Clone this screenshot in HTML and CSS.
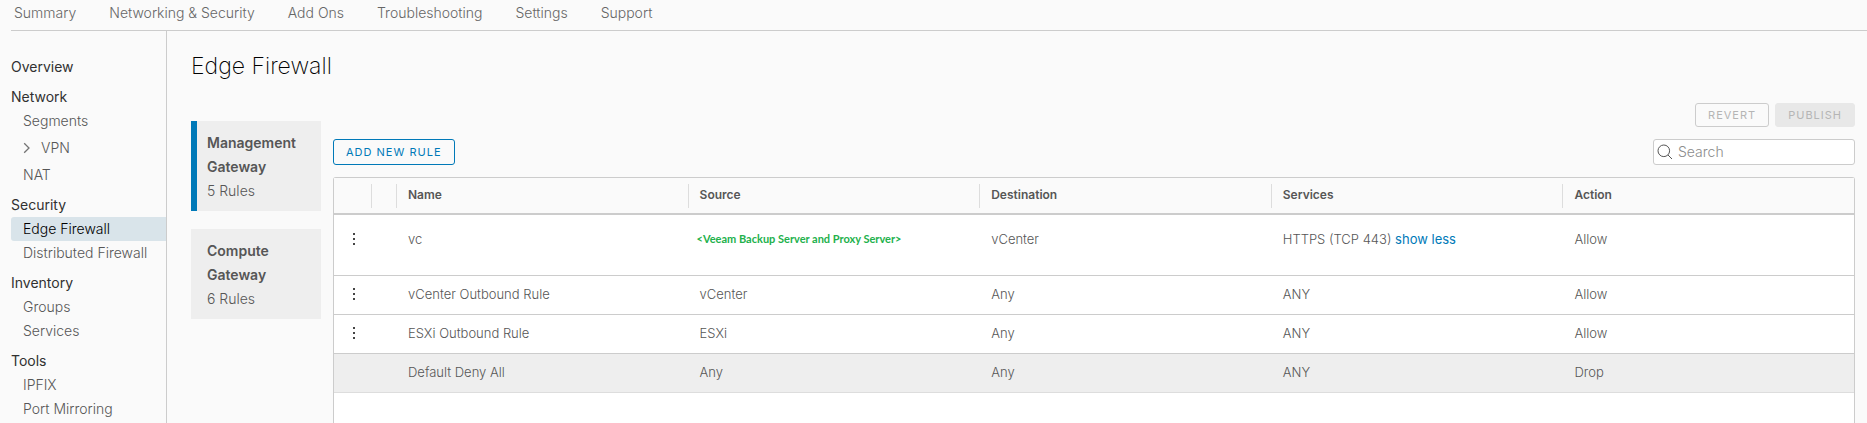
FILE: index.html
```
<!DOCTYPE html>
<html lang="en">
<head>
    <meta charset="UTF-8">
    <meta name="viewport" content="width=device-width, initial-scale=1.0">
    <title>Edge Firewall</title>
    <link rel="stylesheet" href="styles.css">
</head>
<body>

    <nav class="topnav">
        <a href="#">Summary</a>
        <a href="#">Networking &amp; Security</a>
        <a href="#">Add Ons</a>
        <a href="#">Troubleshooting</a>
        <a href="#">Settings</a>
        <a href="#">Support</a>
    </nav>

    <div class="layout">
        <nav class="sidebar">
            <a class="heading" href="#">Overview</a>

            <div class="heading">Network</div>
            <a href="#">Segments</a>
            <a class="expandable" href="#">
                <svg class="caret" width="8" height="12" viewBox="0 0 8 12"><path d="M1.2 1.2 6 6 1.2 10.8"/></svg>
                VPN
            </a>
            <a href="#">NAT</a>

            <div class="heading">Security</div>
            <a class="active" href="#">Edge Firewall</a>
            <a href="#">Distributed Firewall</a>

            <div class="heading">Inventory</div>
            <a href="#">Groups</a>
            <a href="#">Services</a>

            <div class="heading">Tools</div>
            <a href="#">IPFIX</a>
            <a href="#">Port Mirroring</a>
        </nav>

        <main class="content">
            <h1>Edge Firewall</h1>

            <div class="columns">
                <div class="gateways">
                    <a class="gateway selected" href="#">
                        <strong>Management Gateway</strong>
                        <span>5 Rules</span>
                    </a>
                    <a class="gateway" href="#">
                        <strong>Compute Gateway</strong>
                        <span>6 Rules</span>
                    </a>
                </div>

                <section class="rules">
                    <div class="actions">
                        <button class="btn" disabled>REVERT</button>
                        <button class="btn btn-solid" disabled>PUBLISH</button>
                    </div>

                    <div class="toolbar">
                        <button class="btn btn-primary">ADD NEW RULE</button>
                        <label class="search">
                            <svg width="16" height="16" viewBox="0 0 16 16" aria-hidden="true"><circle cx="6.8" cy="6.8" r="5.8"/><path d="M11 11 15 15"/></svg>
                            <input type="search" placeholder="Search" aria-label="Search">
                        </label>
                    </div>

                    <div class="grid">
                        <table>
                            <colgroup>
                                <col class="col-menu">
                                <col class="col-expand">
                                <col span="5">
                            </colgroup>
                            <thead>
                                <tr>
                                    <th></th>
                                    <th><div></div></th>
                                    <th><div>Name</div></th>
                                    <th><div>Source</div></th>
                                    <th><div>Destination</div></th>
                                    <th><div>Services</div></th>
                                    <th><div>Action</div></th>
                                </tr>
                            </thead>
                            <tbody>
                                <tr class="tall">
                                    <td><button class="menu" aria-label="Rule actions"><svg width="4" height="14" viewBox="0 0 4 14"><path d="M1 1h2v2H1zM1 6h2v2H1zM1 11h2v2H1z"/></svg></button></td>
                                    <td></td>
                                    <td>vc</td>
                                    <td class="placeholder">&lt;Veeam Backup Server and Proxy Server&gt;</td>
                                    <td>vCenter</td>
                                    <td>HTTPS (TCP 443) <a href="#">show less</a></td>
                                    <td>Allow</td>
                                </tr>
                                <tr>
                                    <td><button class="menu" aria-label="Rule actions"><svg width="4" height="14" viewBox="0 0 4 14"><path d="M1 1h2v2H1zM1 6h2v2H1zM1 11h2v2H1z"/></svg></button></td>
                                    <td></td>
                                    <td>vCenter Outbound Rule</td>
                                    <td>vCenter</td>
                                    <td>Any</td>
                                    <td>ANY</td>
                                    <td>Allow</td>
                                </tr>
                                <tr>
                                    <td><button class="menu" aria-label="Rule actions"><svg width="4" height="14" viewBox="0 0 4 14"><path d="M1 1h2v2H1zM1 6h2v2H1zM1 11h2v2H1z"/></svg></button></td>
                                    <td></td>
                                    <td>ESXi Outbound Rule</td>
                                    <td>ESXi</td>
                                    <td>Any</td>
                                    <td>ANY</td>
                                    <td>Allow</td>
                                </tr>
                                <tr class="default">
                                    <td></td>
                                    <td></td>
                                    <td>Default Deny All</td>
                                    <td>Any</td>
                                    <td>Any</td>
                                    <td>ANY</td>
                                    <td>Drop</td>
                                </tr>
                            </tbody>
                        </table>
                    </div>
                </section>
            </div>
        </main>
    </div>

</body>
</html>
```
FILE: styles.css
```
* {
    box-sizing: border-box;
}

body {
    display: flex;
    flex-direction: column;
    height: 100vh;
    margin: 0;
    overflow: hidden;
    background-color: #fafafa;
    color: #565656;
    font-family: Inter, "Noto Sans", sans-serif;
    font-size: 14px;
    font-weight: 300;
    line-height: 24px;
}

a {
    color: inherit;
    text-decoration: none;
}

.topnav {
    display: flex;
    gap: 33px;
    height: 31px;
    margin-left: 11px;
    padding: 1px 3px 0;
    border-bottom: 1px solid #ccc;
    color: #666;
}

.layout {
    display: flex;
    flex: 1;
    min-height: 0;
}

/* Sidebar */
.sidebar {
    flex: none;
    width: 156px;
    margin-left: 11px;
    padding-top: 18px;
    border-right: 1px solid #ccc;
}

.sidebar a,
.sidebar .heading {
    display: block;
    padding-left: 12px;
    white-space: nowrap;
}

.sidebar .heading {
    margin-top: 6px;
    padding-left: 0;
    color: #313131;
    font-weight: 400;
}

.sidebar .expandable {
    display: flex;
    align-items: center;
    gap: 10px;
    height: 30px;
}

.caret {
    fill: none;
    stroke: #737373;
    stroke-width: 1.3;
}

.sidebar .active {
    background-color: #d9e4ea;
    border-radius: 3px 0 0 3px;
    color: #000;
}

/* Main area */
.content {
    display: flex;
    flex: 1;
    flex-direction: column;
    min-width: 0;
    padding: 23px 12px 0 24px;
}

h1 {
    margin: 0;
    color: #000;
    font-size: 23px;
    font-weight: 200;
    line-height: 24px;
}

.columns {
    display: flex;
    flex: 1;
    gap: 12px;
    min-height: 0;
    padding-top: 25px;
}

.gateways {
    display: flex;
    flex-direction: column;
    gap: 18px;
    width: 130px;
    padding-top: 18px;
}

.gateway {
    display: flex;
    flex-direction: column;
    padding: 10px 12px 8px 16px;
    background-color: #eee;
}

.gateway.selected {
    padding-left: 10px;
    border-left: 6px solid #0079b8;
}

.gateway strong {
    font-weight: 600;
}

.rules {
    display: flex;
    flex: 1;
    flex-direction: column;
    gap: 12px;
    min-width: 0;
}

.actions {
    display: flex;
    justify-content: flex-end;
    gap: 6px;
}

.toolbar {
    display: flex;
    justify-content: space-between;
}

.btn {
    height: 24px;
    padding: 0 12px;
    background: transparent;
    border: 1px solid #ccc;
    border-radius: 3px;
    color: #b5b5b5;
    font-family: inherit;
    font-size: 11px;
    font-weight: 400;
    letter-spacing: 1px;
}

.btn-solid {
    background-color: #e8e8e8;
    border-color: #e8e8e8;
}

.btn-primary {
    height: 26px;
    border-color: #0079b8;
    color: #0079b8;
}

.search {
    display: flex;
    align-items: center;
    gap: 5px;
    width: 202px;
    height: 26px;
    padding: 0 3px;
    background-color: #fff;
    border: 1px solid #ccc;
    border-radius: 3px;
}

.search svg {
    flex: none;
    fill: none;
    stroke: #565656;
}

.search input {
    width: 100%;
    padding: 0;
    background: none;
    border: none;
    font: inherit;
}

.search input::placeholder {
    color: #8c8c8c;
}

/* Rules table */
.grid {
    flex: 1;
    background-color: #fff;
    border: 1px solid #ccc;
    border-bottom: none;
    border-radius: 3px 3px 0 0;
}

table {
    width: 100%;
    border-collapse: separate;
    border-spacing: 0;
    table-layout: fixed;
    font-size: 13px;
}

.col-menu {
    width: 37px;
}

.col-expand {
    width: 25px;
}

th {
    padding: 6px 0 5px;
    background-color: #fafafa;
    border-bottom: 2px solid #ccc;
    font-size: 12px;
    font-weight: 600;
    line-height: 22px;
    text-align: left;
}

th div {
    height: 24px;
    padding-left: 11px;
    border-left: 1px solid #ddd;
}

td {
    height: 39px;
    padding: 6px 0 0 12px;
    border-bottom: 1px solid #ccc;
    vertical-align: top;
    white-space: nowrap;
}

.tall td {
    height: 61px;
    padding-top: 12px;
}

.default td {
    background-color: #eee;
    border-bottom-color: #ddd;
}

td a {
    color: #0079b8;
    font-weight: 400;
}

.tall .placeholder {
    padding-left: 9px;
    color: #22b14c;
    font-family: Lato, sans-serif;
    font-size: 11px;
    font-weight: 700;
}

.menu {
    display: flex;
    align-items: center;
    height: 24px;
    padding: 0 6px;
    background: none;
    border: none;
    fill: #454545;
}
```
